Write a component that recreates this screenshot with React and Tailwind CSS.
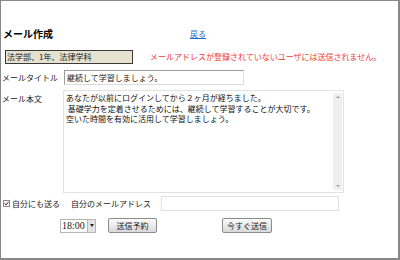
import React from "react";

const jp = { fontFamily: '"Noto Sans CJK JP", "Noto Sans", sans-serif' };

function App() {
  return (
    <div
      style={jp}
      className="w-[400px] h-[260px] bg-white border-t border-l border-r-2 border-b-2 border-[#888] text-[8px] leading-none text-black overflow-hidden"
    >
      {/* title row */}
      <div className="mt-[27px] h-[12px] flex items-center">
        <div className="ml-[2px] w-[187px] text-[10px] font-bold">メール作成</div>
        <a href="#" className="text-[#1a6fc9] underline">戻る</a>
      </div>

      {/* target row */}
      <div className="mt-[10px] h-[14px] flex items-center">
        <div className="ml-[4px] w-[128px] h-[14px] bg-[#e6e2cf] border border-[#3a3a3a] flex items-center pl-[1px] text-[#222]">
          法学部、1年、法律学科
        </div>
        <div className="ml-[17px] text-[#f2353d]">
          メールアドレスが登録されていないユーザには送信されません。
        </div>
      </div>

      {/* mail title */}
      <div className="mt-[6px] h-[15px] flex items-center">
        <div className="ml-[1px] w-[62px] text-[#222]">メールタイトル</div>
        <div className="w-[180px] h-[15px] border border-t-[#9a9a9a] border-l-[#9a9a9a] border-r-[#dcdcdc] border-b-[#dcdcdc] flex items-center pl-[2px] text-[#222]">
          継続して学習しましょう。
        </div>
      </div>

      {/* mail body */}
      <div className="mt-[5px] h-[103px] flex items-start">
        <div className="ml-[1px] w-[61px] pt-[4px] leading-[10.5px] text-[#222]">メール本文</div>
        <div className="w-[281px] h-[103px] border border-[#e2e2e2] flex">
          <div className="flex-1 pl-[2px] pt-[2px] leading-[10.5px] text-[#111] whitespace-pre">
            <div>あなたが以前にログインしてから２ヶ月が経ちました。</div>
            <div>{" "}基礎学力を定着させるためには、継続して学習することが大切です。</div>
            <div>空いた時間を有効に活用して学習しましょう。</div>
          </div>
          <div className="w-[9px] mr-[1px] mt-[2px] mb-[2px] bg-[#efefef] flex flex-col justify-between items-center py-[3px]">
            <div className="w-0 h-0 border-l-[2px] border-r-[2px] border-b-[2px] border-l-transparent border-r-transparent border-b-[#999]" />
            <div className="w-0 h-0 border-l-[2px] border-r-[2px] border-t-[2px] border-l-transparent border-r-transparent border-t-[#999]" />
          </div>
        </div>
      </div>

      {/* send to self */}
      <div className="mt-[3px] h-[15px] flex items-center">
        <div className="ml-[2px] w-[7px] h-[7px] border border-[#8a8a8a] bg-[#f4f4f4] flex items-center justify-center">
          <svg width="5" height="5" viewBox="0 0 5 5">
            <path d="M0.5 2.5 L2 4 L4.5 0.8" stroke="#333" strokeWidth="1" fill="none" />
          </svg>
        </div>
        <div className="ml-[2px] w-[59px] text-[#222]">自分にも送る</div>
        <div className="w-[90px] text-[#222]">自分のメールアドレス</div>
        <div className="w-[178px] h-[15px] border border-[#e0e0e0]" />
      </div>

      {/* actions */}
      <div className="mt-[7px] h-[15px] flex items-center">
        <div className="ml-[59px] w-[36px] h-[14px] border border-[#b5b5b5] flex items-stretch">
          <div
            style={{ fontFamily: '"Liberation Serif", serif' }}
            className="flex-1 flex items-center pl-[1px] text-[10px] text-[#222]"
          >
            18:00
          </div>
          <div className="w-[8px] bg-[#e4e4e4] border-l border-[#b5b5b5] flex items-center justify-center">
            <div className="w-0 h-0 border-l-[2px] border-r-[2px] border-t-[3px] border-l-transparent border-r-transparent border-t-[#222]" />
          </div>
        </div>
        <button className="ml-[12px] w-[49px] h-[15px] border border-[#8c8c8c] rounded-[2px] bg-gradient-to-b from-[#fbfbfb] to-[#d9d9d9] text-[#222] flex items-center justify-center">
          送信予約
        </button>
        <button className="ml-[65px] w-[50px] h-[15px] border border-[#8c8c8c] rounded-[2px] bg-gradient-to-b from-[#fbfbfb] to-[#d9d9d9] text-[#222] flex items-center justify-center">
          今すぐ送信
        </button>
      </div>
    </div>
  );
}

export default App;
